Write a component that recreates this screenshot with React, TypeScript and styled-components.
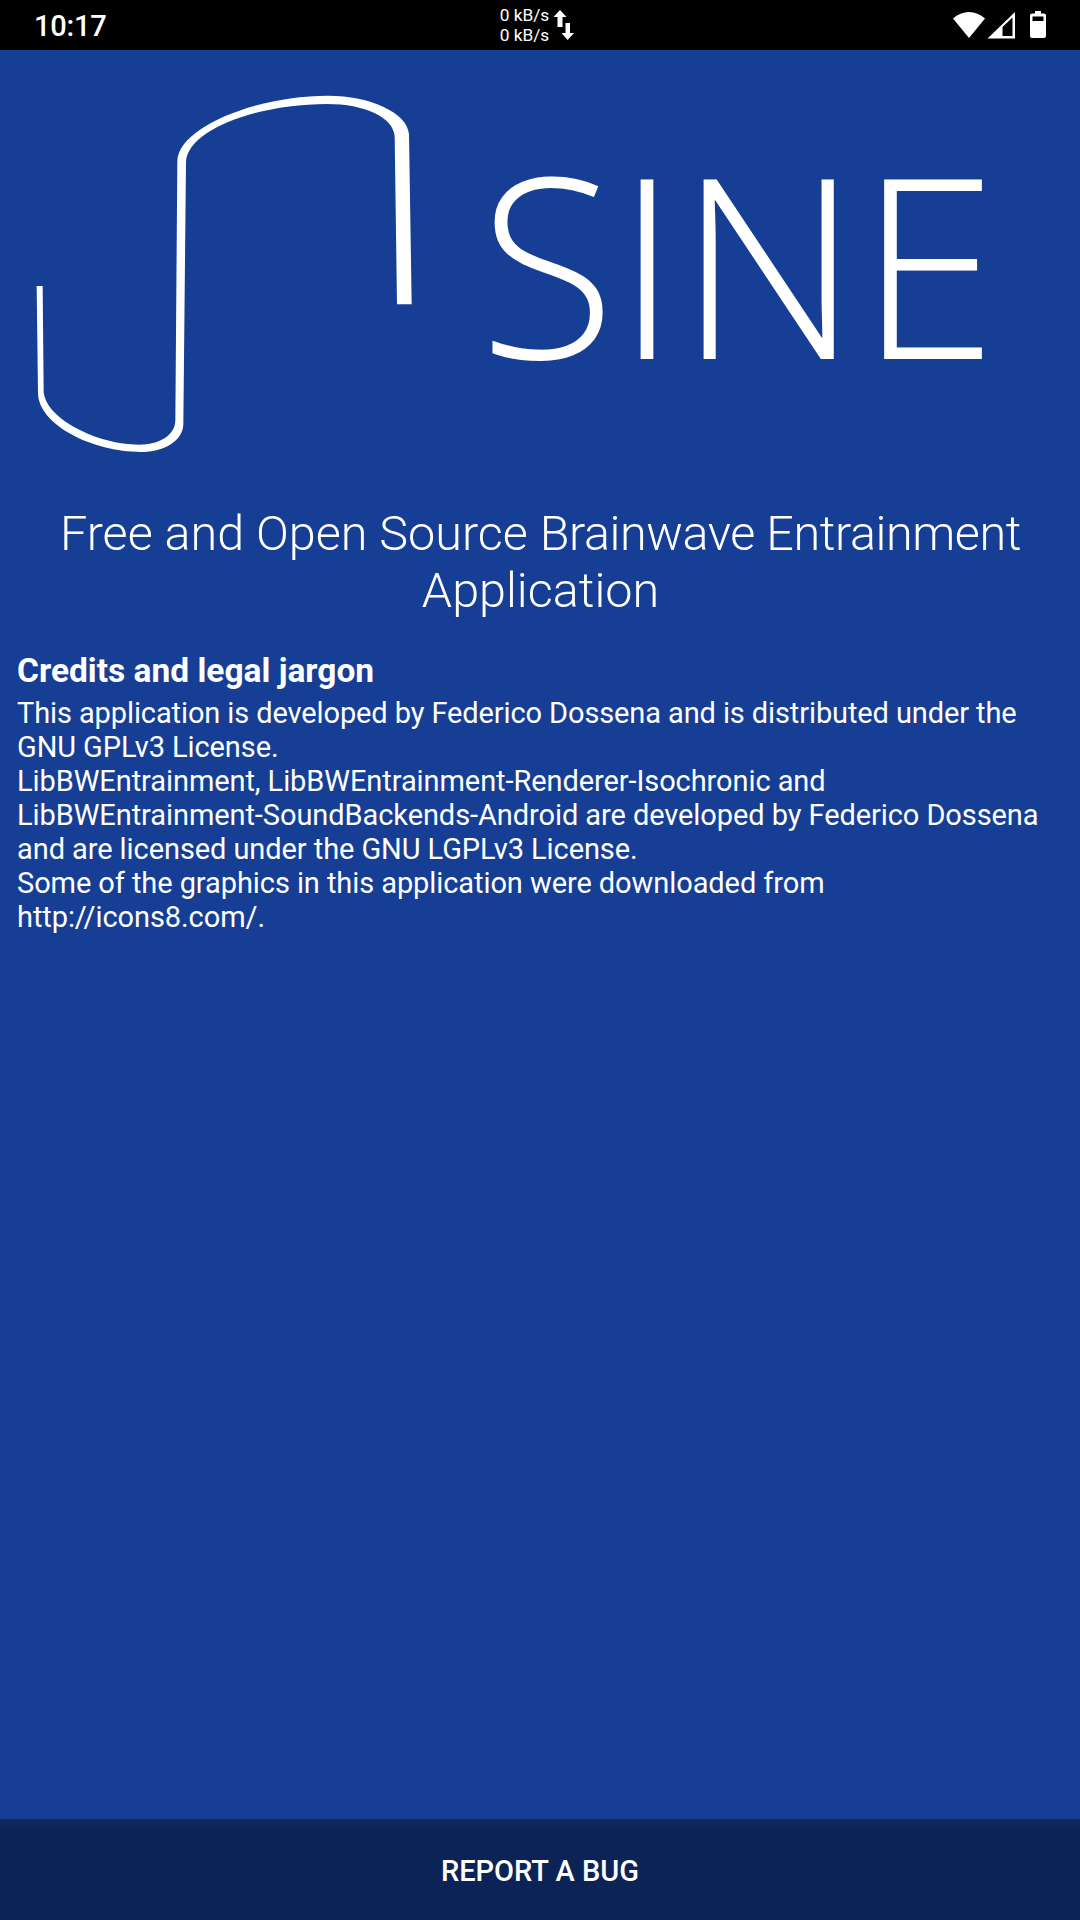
import React from 'react';
import styled, { createGlobalStyle } from 'styled-components';

const GlobalStyle = createGlobalStyle`
  *, *::before, *::after { box-sizing: border-box; }
  html, body { margin: 0; padding: 0; background: #163e94; }
  body { font-family: Roboto, "Noto Sans", sans-serif; color: #fff; }
`;

const Screen = styled.div`
  display: flex;
  flex-direction: column;
  width: 1080px;
  height: 1920px;
  overflow: hidden;
  background: #163e94;
`;

const StatusBar = styled.header`
  display: grid;
  grid-template-columns: 1fr auto 1fr;
  align-items: center;
  flex: none;
  height: 50px;
  padding: 0 33px 0 34px;
  background: #000;
`;

const Clock = styled.time`
  font-size: 29px;
  font-weight: 500;
  line-height: 34px;
  letter-spacing: -0.2px;
  padding-top: 1px;
`;

const Network = styled.div`
  display: flex;
  align-items: center;
  gap: 4px;
  padding-right: 6px;
`;

const Rates = styled.div`
  font-size: 17.3px;
  line-height: 20px;
  text-align: right;
`;

const StatusIcons = styled.div`
  display: flex;
  justify-content: flex-end;
  align-items: center;
`;

const Glyph = styled.svg`
  display: block;
  flex: none;
  fill: #fff;
`;

const Content = styled.main`
  flex: 1;
  min-height: 0;
`;

const Brand = styled.div`
  display: flex;
  align-items: flex-start;
  height: 430px;
  padding: 20px 0 0 20px;
`;

const Wordmark = styled.h1`
  margin: 16px 0 0 49px;
  font-family: "Open Sans", sans-serif;
  font-size: 250.3px;
  font-weight: 300;
  line-height: 352px;
  white-space: nowrap;
`;

const Tagline = styled.h2`
  margin: 25px 0 0;
  padding: 0 16px 0 17px;
  font-size: 48.5px;
  font-weight: 300;
  line-height: 57px;
  text-align: center;
`;

const Tracked = styled.span<{ $spacing: number }>`
  letter-spacing: ${(p) => p.$spacing}px;
`;

const Credits = styled.section`
  padding: 32px 17px 0;
`;

const CreditsTitle = styled.h3`
  margin: 0;
  font-size: 33.5px;
  font-weight: 700;
  line-height: 39px;
  white-space: nowrap;
`;

const CreditsText = styled.p`
  margin: 6px 0 0;
  font-size: 29px;
  line-height: 34px;
  letter-spacing: -0.08px;
  white-space: nowrap;
`;

const BugButton = styled.button`
  flex: none;
  height: 101px;
  margin: 0;
  padding: 3px 0 0;
  border: 0;
  color: #fff;
  background: linear-gradient(#0e2c5e 0, #0b2355 12px, #0b2355 100%);
  font: 500 29px/34px Roboto, sans-serif;
  text-transform: uppercase;
`;

export default function App() {
  return (
    <>
      <GlobalStyle />
      <Screen>
        <StatusBar>
          <Clock>10:17</Clock>
          <Network>
            <Rates>
              <div>0 kB/s</div>
              <div>0 kB/s</div>
            </Rates>
            <Glyph width="22" height="32" viewBox="0 0 22 32">
              <path d="M7 1 13.5 8H9.5V18H4.5V8H.5Z" />
              <path d="M12.500 14H17V24H21L14.700 31 8.500 24H12.500Z" />
            </Glyph>
          </Network>
          <StatusIcons>
            <Glyph width="94" height="30" viewBox="0 0 94 30">
              <path d="M0 8.500C9-.200 23-.200 32 8.500L16 28Z" />
              <path fillRule="evenodd" d="M34.500 28.500 62 2V28.500ZM49.500 17V26H59.500V7.500Z" />
              <path
                fillRule="evenodd"
                d="M82 1H88V3.500H91Q93 3.500 93 5.500V26Q93 28 91 28H79Q77 28 77 26V5.500Q77 3.500 79 3.500H82ZM79.500 6.500V11H90.500V6.500Z"
              />
            </Glyph>
          </StatusIcons>
        </StatusBar>
        <Content>
          <Brand>
            <Glyph width="410" height="400" viewBox="0 0 1230 1200">
              <path d="M50 648H68L71 966C78 1048 235 1124 358 1124C415 1124 466 1098 466 1050L472 274C474 172 710 77 925 77C1050 77 1162 128 1167 192L1175 703H1131L1124 198C1119 142 1035 102 920 102C715 102 503 178 498 276L490 1064C488 1112 432 1146 362 1146C220 1146 56 1066 54 970Z" />
            </Glyph>
            <Wordmark>SINE</Wordmark>
          </Brand>
          <Tagline>
            Free and Open Source <Tracked $spacing={-0.42}>Brainwave Entrainment</Tracked>
            <br />
            Application
          </Tagline>
          <Credits>
            <CreditsTitle>Credits and legal jargon</CreditsTitle>
            <CreditsText>
              <Tracked $spacing={-0.11}>
                This application is developed by Federico Dossena and is distributed under the
              </Tracked>
              <br />
              GNU GPLv3 License.
              <br />
              LibBWEntrainment, LibBWEntrainment-Renderer-Isochronic and
              <br />
              LibBWEntrainment-SoundBackends-Android are developed by Federico Dossena
              <br />
              and are licensed under the GNU LGPLv3 License.
              <br />
              Some of the graphics in this application were downloaded from
              <br />
              http://icons8.com/.
            </CreditsText>
          </Credits>
        </Content>
        <BugButton>Report a bug</BugButton>
      </Screen>
    </>
  );
}
